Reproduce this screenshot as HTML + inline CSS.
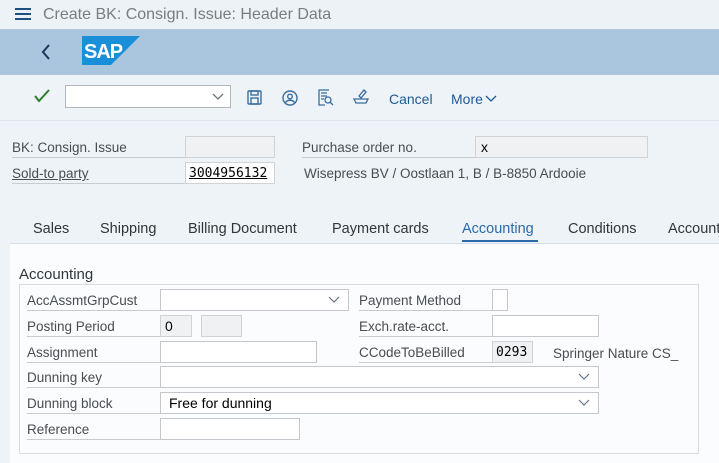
<!DOCTYPE html>
<html><head><meta charset="utf-8"><style>
*{box-sizing:border-box;margin:0;padding:0}
body{width:719px;height:463px;overflow:hidden;background:#eef3f8;font-family:"Liberation Sans",sans-serif;position:relative;color:#32363a}
.a{position:absolute}
.t{font-size:14px;white-space:nowrap}
.lbl{position:absolute;font-size:13.5px;color:#4a4d50;border-bottom:1px solid #c8ccd0;height:22px;line-height:23px;padding-left:0}
.inp{position:absolute;background:#fff;border:1px solid #c4c8cc;height:22px;font-size:14px;line-height:21px;padding-left:8px;color:#000}
.ro{background:#f0f1f2;border-color:#d0d3d6}
.chev{position:absolute;right:8px;top:6px}
</style></head><body>
<div class="a" style="left:0;top:0;width:719px;height:29px;background:#edf2f7"></div>
<div class="a" style="left:15px;top:8px;width:16px;height:2px;background:#1d4f7f"></div>
<div class="a" style="left:15px;top:13px;width:16px;height:2px;background:#1d4f7f"></div>
<div class="a" style="left:15px;top:18px;width:16px;height:2px;background:#1d4f7f"></div>
<div class="a t" style="left:43px;top:6px;font-size:16px;color:#7a7d80">Create BK: Consign. Issue: Header Data</div>
<div class="a" style="left:0;top:29px;width:719px;height:46px;background:#aac6de"></div>
<svg class="a" style="left:40px;top:44px" width="12" height="16"><path d="M9 1L3 8l6 7" stroke="#1d3557" stroke-width="2" fill="none"/></svg>
<svg class="a" style="left:82px;top:36px" width="58" height="29"><path d="M0 0H58L29 29H0Z" fill="#1a8fd9"/><text x="2" y="22" font-family="Liberation Sans" font-weight="bold" font-size="20" fill="#fff" letter-spacing="-1">SAP</text></svg>
<svg class="a" style="left:34px;top:89px" width="16" height="14"><path d="M1 7l4 5L15 1" stroke="#2b7c2b" stroke-width="2" fill="none"/></svg>
<div class="inp" style="left:65px;top:85px;width:166px;height:23px;border-color:#b0b6bc"><svg class="chev" style="top:7px;right:6px" width="12" height="8"><path d="M1 1l5 5 5-5" stroke="#6a7580" stroke-width="1.3" fill="none"/></svg></div>
<svg class="a" style="left:247px;top:90px" width="15" height="15" fill="none" stroke="#3a6ea0" stroke-width="1.4"><rect x="1" y="1" width="13" height="13" rx="1"/><rect x="4" y="1" width="7" height="4"/><rect x="4" y="8" width="7" height="6"/></svg>
<svg class="a" style="left:282px;top:90px" width="16" height="16" fill="none" stroke="#3a6ea0" stroke-width="1.4"><circle cx="8" cy="8" r="7"/><circle cx="8" cy="6.5" r="2.3"/><path d="M3.5 12.5c2-3 7-3 9 0"/></svg>
<svg class="a" style="left:318px;top:89px" width="16" height="17" fill="none" stroke="#3a6ea0" stroke-width="1.3"><path d="M11 1H1v15h6"/><path d="M3 4h6M3 7h6M3 10h3"/><circle cx="10" cy="11" r="3"/><path d="M12 13l3 3"/></svg>
<svg class="a" style="left:353px;top:88px" width="16" height="17" fill="none" stroke="#3a6ea0" stroke-width="1.3"><path d="M6 8l5-6 2 2-5 6z"/><path d="M1 11h14l-2 4H3z"/></svg>
<div class="a t" style="left:389px;top:91px;color:#1d5a92">Cancel</div>
<div class="a t" style="left:451px;top:91px;color:#1d5a92">More</div>
<svg class="a" style="left:485px;top:95px" width="12" height="8"><path d="M1 1l5 5 5-5" stroke="#1d5a92" stroke-width="1.3" fill="none"/></svg>
<div class="a" style="left:0;top:120px;width:719px;height:1px;background:#dde3ea"></div>

<div class="lbl" style="left:12px;top:136px;width:173px;color:#4a4d50">BK: Consign. Issue</div>
<div class="inp ro" style="left:185px;top:136px;width:90px"></div>
<div class="lbl" style="left:12px;top:162px;width:173px;text-decoration:underline">Sold-to party</div>
<div class="inp" style="left:185px;top:162px;width:90px;background:#fff;border-color:#d0d3d6;padding-left:3px;font-family:'DejaVu Sans Mono','Liberation Mono',monospace;font-size:13px;text-decoration:underline">3004956132</div>
<div class="lbl" style="left:302px;top:136px;width:173px">Purchase order no.</div>
<div class="inp ro" style="left:475px;top:136px;width:173px;padding-left:5px">x</div>
<div class="a t" style="left:304px;top:166px;color:#4a4d50;font-size:13.5px">Wisepress BV / Oostlaan 1, B / B-8850 Ardooie</div>

<div class="a t" style="left:33px;top:221px;font-size:14.5px">Sales</div>
<div class="a t" style="left:100px;top:221px;font-size:14.5px">Shipping</div>
<div class="a t" style="left:188px;top:221px;font-size:14.5px">Billing Document</div>
<div class="a t" style="left:332px;top:221px;font-size:14.5px">Payment cards</div>
<div class="a t" style="left:462px;top:221px;font-size:14.5px;color:#2a6aa8">Accounting</div>
<div class="a t" style="left:568px;top:221px;font-size:14.5px">Conditions</div>
<div class="a t" style="left:668px;top:221px;font-size:14.5px">Account</div>
<div class="a" style="left:10px;top:243px;width:709px;height:220px;background:#fafcfe;border-top:1px solid #d6e0ea"></div>
<div class="a" style="left:462px;top:240px;width:76px;height:2px;background:#2a6aa8"></div>
<div class="a t" style="left:19px;top:266px;font-size:15px">Accounting</div>
<div class="a" style="left:19px;top:284px;width:680px;height:170px;border:1px solid #d8dcdf"></div>

<div class="lbl" style="left:27px;top:289px;width:133px">AccAssmtGrpCust</div>
<div class="inp" style="left:160px;top:289px;width:189px"><svg class="chev" width="12" height="8"><path d="M1 1l5 5 5-5" stroke="#6a7580" stroke-width="1.2" fill="none"/></svg></div>
<div class="lbl" style="left:27px;top:315px;width:133px">Posting Period</div>
<div class="inp ro" style="left:160px;top:315px;width:32px;padding-left:4px">0</div>
<div class="inp ro" style="left:201px;top:315px;width:41px"></div>
<div class="lbl" style="left:27px;top:341px;width:133px">Assignment</div>
<div class="inp" style="left:160px;top:341px;width:157px"></div>
<div class="lbl" style="left:27px;top:366px;width:133px">Dunning key</div>
<div class="inp" style="left:160px;top:366px;width:439px"><svg class="chev" width="12" height="8"><path d="M1 1l5 5 5-5" stroke="#6a7580" stroke-width="1.2" fill="none"/></svg></div>
<div class="lbl" style="left:27px;top:392px;width:133px">Dunning block</div>
<div class="inp" style="left:160px;top:392px;width:439px">Free for dunning<svg class="chev" width="12" height="8"><path d="M1 1l5 5 5-5" stroke="#6a7580" stroke-width="1.2" fill="none"/></svg></div>
<div class="lbl" style="left:27px;top:418px;width:133px">Reference</div>
<div class="inp" style="left:160px;top:418px;width:140px"></div>

<div class="lbl" style="left:359px;top:289px;width:133px">Payment Method</div>
<div class="inp" style="left:492px;top:289px;width:16px"></div>
<div class="lbl" style="left:359px;top:315px;width:133px">Exch.rate-acct.</div>
<div class="inp" style="left:492px;top:315px;width:107px"></div>
<div class="lbl" style="left:359px;top:341px;width:133px">CCodeToBeBilled</div>
<div class="inp ro" style="left:492px;top:341px;width:41px;padding-left:3px;font-family:'DejaVu Sans Mono','Liberation Mono',monospace;font-size:13px">0293</div>
<div class="a t" style="left:553px;top:346px;font-size:13.5px;color:#4a4d50">Springer Nature CS_</div>
</body></html>
